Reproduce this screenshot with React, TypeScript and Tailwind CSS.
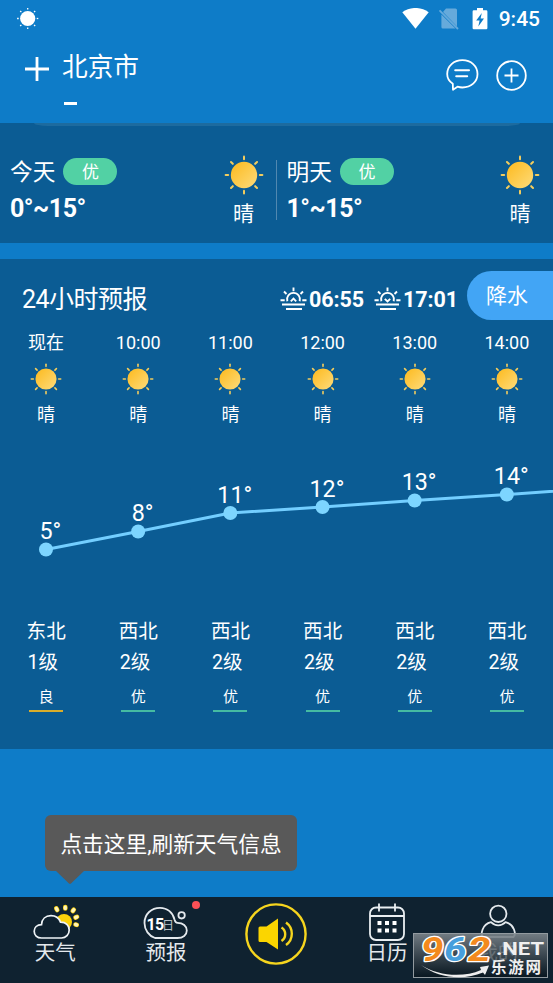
import type { ReactNode } from "react";

const hours = [
  { time: "现在", temp: 5, y: 549.5, wind: "东北", level: "1级", air: "良" },
  { time: "10:00", temp: 8, y: 531.5, wind: "西北", level: "2级", air: "优" },
  { time: "11:00", temp: 11, y: 513, wind: "西北", level: "2级", air: "优" },
  { time: "12:00", temp: 12, y: 507, wind: "西北", level: "2级", air: "优" },
  { time: "13:00", temp: 13, y: 500.5, wind: "西北", level: "2级", air: "优" },
  { time: "14:00", temp: 14, y: 494.5, wind: "西北", level: "2级", air: "优" },
];

const CHART_TOP = 436;
const STEP = 92.17;

const rays = [0, 45, 90, 135, 180, 225, 270, 315];

function Sun({ className }: { className: string }) {
  return (
    <svg viewBox="0 0 40 40" className={className}>
      <defs>
        <linearGradient id="sun" x1="0" y1="0" x2="1" y2="1">
          <stop offset="0.2" stopColor="#fdc02f" />
          <stop offset="1" stopColor="#fddc7c" />
        </linearGradient>
      </defs>
      <circle cx="20" cy="20" r="13.2" fill="url(#sun)" />
      {rays.map((r) => (
        <path
          key={r}
          d="M20 1.6v2.6"
          stroke="#f3cd5e"
          strokeWidth="2"
          strokeLinecap="round"
          transform={`rotate(${r} 20 20)`}
        />
      ))}
    </svg>
  );
}

function StatusBar() {
  return (
    <div className="flex h-[38px] items-center justify-between pl-[17px] pr-[13px]">
      <svg viewBox="0 0 22 22" className="h-[22px] w-[22px]" fill="#fff">
        <circle cx="10.7" cy="10.5" r="7.6" />
        {rays.map((r) => (
          <path key={r} d="M10.7 -0.1v1.6" stroke="#fff" strokeWidth="1.3" transform={`rotate(${r} 10.7 10.5)`} />
        ))}
      </svg>
      <div className="flex items-center">
        <svg viewBox="0 0 27 22" className="mr-[9px] h-[22px] w-[27px]" fill="#fff">
          <path d="M0.3 4.3C8 -1.5 19 -1.5 26.7 4.3L13.5 20.8Z" />
        </svg>
        <svg viewBox="0 0 22 22" className="mr-[12px] h-[22px] w-[22px]">
          <path d="M8 0.5h9.5a1.5 1.5 0 0 1 1.5 1.5v16.5L5 4ZM3.4 6.4L17.5 20.5H5a1.5 1.5 0 0 1-1.6-1.5Z" fill="#66aadb" />
          <path d="M1.5 2.3L20 21" stroke="#66aadb" strokeWidth="1.8" />
        </svg>
        <svg viewBox="0 0 16 22" className="mr-[11px] h-[22px] w-[16px]">
          <path d="M5 0h6v2.2h3.2a1.2 1.2 0 0 1 1.2 1.2v16.6a1.2 1.2 0 0 1-1.2 1.2H1.8a1.2 1.2 0 0 1-1.2-1.2V3.4a1.2 1.2 0 0 1 1.2-1.2H5z" fill="#fff" />
          <path d="M9.8 5L4.2 12.5h3.4L6.3 18.6L12 10.5H8.6Z" fill="#0e7cc8" />
        </svg>
        <span className="text-[21px] font-medium leading-[38px]">9:45</span>
      </div>
    </div>
  );
}

function Header() {
  return (
    <header className="flex h-[85px] justify-between pl-[25px] pr-[26px]">
      <div className="flex">
        <svg viewBox="0 0 24 24" className="mt-[19px] h-6 w-6" stroke="#fff" strokeWidth="2.8">
          <path d="M12 0v24M0 12h24" />
        </svg>
        <div className="ml-[13px] pt-[11px]">
          <h1 className="text-[25.7px] leading-9">北京市</h1>
          <div className="ml-[2px] mt-[17px] h-[3px] w-[13px] bg-white" />
        </div>
      </div>
      <div className="flex gap-[17px] pt-[21px]">
        <svg viewBox="0 0 33 33" className="h-[33px] w-[33px]" fill="none" stroke="#fff" strokeWidth="1.8" strokeLinejoin="round">
          <path d="M6.8 24.8C3.3 22.5 1.2 19 1.2 15C1.2 7.2 7.8 1.2 16.4 1.2S31.5 7.2 31.5 15S25 28.5 16.4 28.5C14.5 28.5 13 28.2 11.5 27.7L7 30.7Z" />
          <path d="M9.2 11.3h13.8M10.2 17.3h11" strokeWidth="2" strokeLinecap="round" />
        </svg>
        <svg viewBox="0 0 31 31" className="mt-px h-[31px] w-[31px]" fill="none" stroke="#fff" strokeWidth="1.8">
          <circle cx="15.5" cy="15.5" r="14.3" />
          <path d="M15.5 8.5v14M8.5 15.5h14" />
        </svg>
      </div>
    </header>
  );
}

function Day({ name, range }: { name: string; range: string }) {
  return (
    <div className="flex justify-between pl-[10px] pr-[13px]">
      <div>
        <div className="mt-[32px] flex h-[32px] items-center gap-[8px]">
          <span className="pt-[3px] text-[22.7px] leading-8">{name}</span>
          <span className="h-[27px] w-[54px] rounded-full bg-[#52d1a4] text-center text-[17px] leading-[29px]">优</span>
        </div>
        <div className="mt-[6px] text-[25px] font-bold leading-8 tracking-[-0.5px]">{range}</div>
      </div>
      <div className="mt-[32px] flex flex-col items-center">
        <Sun className="h-[40px] w-[40px]" />
        <span className="mt-[3px] text-[21px] leading-8">晴</span>
      </div>
    </div>
  );
}

function Horizon({ down }: { down?: boolean }) {
  return (
    <svg viewBox="0 0 27 24" className="h-[24px] w-[27px]" fill="none" stroke="#fff" strokeWidth="1.9">
      <path d="M13.5 0.5v3.8M4 4.500l2.500 2.500M23 4.500L20.500 7M0.500 13.300h4.200M22.300 13.300h4.200M2 17.500h23M6 22h16" />
      <path d="M7.3 14.3a6.5 6.5 0 1 1 12.4 0" />
      <path d={down ? "M10.8 11.8l2.7 2.7l2.7-2.7" : "M10.8 14.3l2.7-2.7l2.7 2.7"} />
    </svg>
  );
}

function TemperatureChart() {
  const points = [...hours.map((h) => h.y), 488].map((y, i) => [46 + i * STEP, y - CHART_TOP]);
  return (
    <svg viewBox="0 0 553 180" className="block h-[180px] w-full">
      <polyline points={points.map((p) => p.join(",")).join(" ")} fill="none" stroke="#73ceff" strokeWidth="3" />
      {hours.map((h, i) => {
        const [x, y] = points[i];
        return (
          <g key={h.time}>
            <circle cx={x} cy={y} r="7" fill="#7dd5ff" />
            <text x={x - String(h.temp).length * 6.5} y={y - 10.5} fill="#fff" className="text-[23.3px]">
              {h.temp}°
            </text>
          </g>
        );
      })}
    </svg>
  );
}

function Hourly() {
  return (
    <section className="mt-4 h-[490px] bg-[#0b5c94]">
      <div className="flex h-[68px] items-start pl-[22px] pt-[12px]">
        <h2 className="mt-[9px] w-[258px] text-[25px] leading-[40px] tracking-[-0.5px]">24小时预报</h2>
        <div className="mt-[16px] flex">
          <Horizon />
          <span className="ml-[2px] w-[65px] text-[21.5px] font-bold leading-[26px] tracking-[-0.1px]">06:55</span>
          <Horizon down />
          <span className="ml-[2px] w-[64px] text-[21.5px] font-bold leading-[26px] tracking-[-0.1px]">17:01</span>
        </div>
        <button className="h-[49px] flex-1 rounded-l-full bg-[#42a5f5] pl-[19px] text-left text-[21px] leading-[51px] whitespace-nowrap">
          降水
        </button>
      </div>
      <div className="grid h-[109px] grid-cols-6">
        {hours.map((h) => (
          <div key={h.time} className="flex flex-col items-center">
            <span className="mt-[4px] text-[18px] leading-6">{h.time}</span>
            <Sun className="mt-[8px] h-[32px] w-[32px]" />
            <span className="mt-[8px] text-[18px] leading-6">晴</span>
          </div>
        ))}
      </div>
      <TemperatureChart />
      <div className="grid grid-cols-6">
        {hours.map((h) => (
          <div key={h.time} className="flex flex-col items-center">
            <div className="w-[39px] text-[19.6px] leading-[31px] whitespace-nowrap">
              <div>{h.wind}</div>
              <div className="pl-px">{h.level}</div>
            </div>
            <span className="mt-[7px] text-[15px] leading-6">{h.air}</span>
            <div className={h.air === "良" ? "mt-px h-[2px] w-[34px] bg-[#d9ad2b]" : "mt-px h-[2px] w-[34px] bg-[#45bba2]"} />
          </div>
        ))}
      </div>
    </section>
  );
}

function NavItem({ label, children }: { label: string; children: ReactNode }) {
  return (
    <div className="relative flex flex-col items-center pt-[6px]">
      <div className="flex h-[36px] items-end">{children}</div>
      <span className="text-[20.5px] leading-[28px] text-[#e4e9ed]">{label}</span>
    </div>
  );
}

function BottomNav() {
  return (
    <nav className="grid h-[86px] grid-cols-5 bg-[#0f2230]">
      <NavItem label="天气">
        <svg viewBox="0 0 48 36" className="-mb-px ml-[2px] h-[36px] w-[48px]">
          <circle cx="32" cy="18" r="8" fill="#fbd20a" />
          <g stroke="#fbd20a" strokeWidth="4.6" strokeLinecap="round">
            <path d="M33.3 4.5V3M25.2 6L24.300 4.300M40.800 7l1-1.300M43.500 13.500l1.500-.6M43.500 20.500l1.300.4" />
          </g>
          <g stroke="#fff3ba" strokeWidth="3.2" strokeLinecap="round">
            <path d="M33.3 4.5V3M25.2 6L24.300 4.300M40.800 7l1-1.300M43.500 13.500l1.500-.6M43.500 20.500l1.300.4" />
          </g>
          <path
            d="M9.5 34C5 34 2.2 31 2.2 27.300C2.2 23.500 5 20.800 9.500 20.700C9.800 15 13.500 11.700 19 11.700C24 11.700 27 14.300 28.500 18.100C34 18 37.200 21.500 37.200 26C37.200 30.500 34 34 29.500 34Z"
            fill="#0f2230"
            stroke="#eef3f6"
            strokeWidth="1.7"
          />
        </svg>
      </NavItem>
      <NavItem label="预报">
        <svg viewBox="0 0 46 36" className="h-[36px] w-[46px]" fill="none" stroke="#e4e9ed" strokeWidth="1.8">
          <path d="M12 35C6 33 1.500 27 1.500 20C1.500 11 8.500 4.800 17 4.800C24.500 4.800 30 9.700 31.500 16.500C32 18.500 32.500 19.800 34.500 19.800C40 19.800 43.800 23 43.800 27.500S40 35 34.500 35Z" />
          <circle cx="38.600" cy="12.3" r="3.2" />
          <text x="3.5" y="27" fill="#fff" stroke="none" className="text-[16px] font-bold tracking-[-0.8px]">15</text>
          <text x="19" y="26.5" fill="#b8c2c9" stroke="none" className="text-[12px]">日</text>
        </svg>
        <div className="absolute left-[81px] top-[4px] h-[8px] w-[8px] rounded-full bg-[#fb5056]" />
      </NavItem>
      <div className="flex justify-center pt-[6px]">
        <svg viewBox="0 0 62 62" className="h-[62px] w-[62px]" fill="none" stroke="#f6d51e" strokeWidth="2.4">
          <circle cx="31" cy="31" r="29.6" />
          <path d="M15 23.500h6.500L33 15.500v31L21.500 39H15a1.500 1.500 0 0 1-1.500-1.500V25a1.500 1.500 0 0 1 1.500-1.500Z" fill="#fbd500" stroke="none" />
          <path d="M36.500 24.500a8 8 0 0 1 0 13.500M41 19.500a13.800 13.800 0 0 1 0 22.500" />
        </svg>
      </div>
      <NavItem label="日历">
        <svg viewBox="0 0 36 38" className="-mb-[2px] h-[38px] w-[36px]" fill="none" stroke="#e9eef1" strokeWidth="1.8">
          <rect x="1" y="4.500" width="34" height="32.500" rx="6" />
          <path d="M1 13h34M10 0.500v8M26 0.500v8" />
          <path d="M8.500 20h4M16 20h4M23.500 20h4M8.500 27.500h4M16 27.500h4M23.500 27.500h4" stroke="#fff" strokeWidth="4" />
        </svg>
      </NavItem>
      <NavItem label="我的">
        <svg viewBox="0 0 36 36" className="h-[36px] w-[36px]" fill="none" stroke="#e4e9ed" strokeWidth="1.8">
          <circle cx="18.300" cy="10.800" r="8.200" />
          <path d="M3 34C0.500 31.500 1.800 21.500 11 19.200C15 23.300 21.500 23.300 25.500 19.200C35 21.500 36 31.500 33.600 34Z" />
        </svg>
      </NavItem>
    </nav>
  );
}

function Badge962() {
  return (
    <div className="absolute bottom-[5px] right-[5px] h-[45px] w-[135px] border border-[#929a9f] bg-linear-to-b from-[#7c858b]/90 to-[#07131b]/70">
      <svg viewBox="0 0 135 45" className="-ml-px -mt-px h-[45px] w-[135px] overflow-visible">
        <g className="text-[33px] font-bold italic" stroke="#fff" strokeWidth="2.6" paintOrder="stroke" strokeLinejoin="round">
          <text x="8" y="28" textLength="22.5" lengthAdjust="spacingAndGlyphs" fill="#f38a1d">9</text>
          <text x="31" y="28" textLength="22.5" lengthAdjust="spacingAndGlyphs" fill="#479fdc">6</text>
          <text x="55" y="28" textLength="22.5" lengthAdjust="spacingAndGlyphs" fill="#f38a1d">2</text>
        </g>
        <path d="M8 32C25 43 50 45 68 37L67 34L76 32.5L72 42L70 39.5C50 48 25 45 8 32Z" fill="#eee" />
        <text x="83" y="22" textLength="48" lengthAdjust="spacingAndGlyphs" fill="#f0f0f0" className="text-[18px] font-bold">.NET</text>
        <text x="78" y="40" textLength="50" fill="#f0f0f0" className="text-[15.5px] font-bold">乐游网</text>
      </svg>
    </div>
  );
}

export default function App() {
  return (
    <div className="relative flex h-[983px] w-[553px] flex-col overflow-hidden bg-[#0e7cc8] font-[Roboto,'Noto_Sans_CJK_SC',sans-serif] text-white">
      <StatusBar />
      <Header />
      <section className="relative grid h-[120px] grid-cols-2 bg-[#0b5c94]">
        <div className="absolute left-[34px] top-0 h-[3px] w-[486px] rounded-b-[14px_3px] bg-[#1d6b9f]" />
        <Day name="今天" range="0°~15°" />
        <Day name="明天" range="1°~15°" />
        <div className="absolute left-[276px] top-[37px] h-[60px] w-px bg-[#5188b0]" />
      </section>
      <Hourly />
      <div className="flex-1 pl-[45px] pt-[66px]">
        <div className="h-[56px] w-[252px] rounded-md bg-[#595959] text-center text-[21.7px] leading-[60px]">
          点击这里,刷新天气信息
        </div>
        <svg viewBox="0 0 28 13" className="ml-[11px] block h-[13px] w-[28px]" fill="#595959">
          <path d="M0 0h28L15.5 12a2 2 0 0 1-3 0Z" />
        </svg>
      </div>
      <BottomNav />
      <Badge962 />
    </div>
  );
}
